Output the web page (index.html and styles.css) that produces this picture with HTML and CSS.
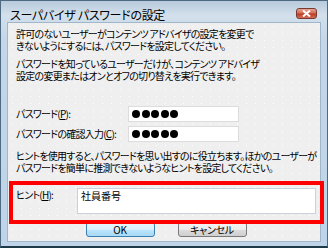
FILE: index.html
```html
<!DOCTYPE html>
<html lang="ja">
<head>
  <meta charset="UTF-8">
  <title>スーパバイザ パスワードの設定</title>
  <link rel="stylesheet" href="styles.css">
</head>
<body>
  <div class="window">
    <div class="titlebar">
      <span class="title">スーパバイザ パスワードの設定</span>
      <button class="close" type="button" aria-label="閉じる">
        <svg width="9" height="7" viewBox="0 0 9 7"><path d="M1 0.5 L8 6.5 M8 0.5 L1 6.5" stroke="#fff" stroke-width="2"/></svg>
      </button>
    </div>

    <div class="client">
      <p class="msg">許可のないユーザーがコンテンツ アドバイザの設定を変更で<br>きないようにするには、パスワードを設定してください。</p>
      <p class="msg gap">パスワードを知っているユーザーだけが、コンテンツ アドバイザ<br>設定の変更またはオンとオフの切り替えを実行できます。</p>

      <div class="rows">
        <label class="row">
          <span class="label">パスワード(<u>P</u>):</span>
          <span class="field"><i></i><i></i><i></i><i></i><i></i></span>
        </label>
        <label class="row">
          <span class="label">パスワードの確認入力(<u>C</u>):</span>
          <span class="field"><i></i><i></i><i></i><i></i><i></i></span>
        </label>
      </div>

      <p class="msg hint-msg">ヒントを使用すると、パスワードを思い出すのに役立ちます。ほかのユーザーが<br>パスワードを簡単に推測できないようなヒントを設定してください。</p>

      <label class="hint-row">
        <span class="hint-label">ヒント(<u>H</u>):</span>
        <span class="hint-field">社員番号</span>
      </label>

      <div class="buttons">
        <button class="btn default" type="button">OK</button>
        <button class="btn" type="button">キャンセル</button>
      </div>
    </div>

    <div class="mark"></div>
  </div>
</body>
</html>
```

FILE: styles.css
```css
body {
  margin: 0;
  width: 328px;
  height: 248px;
  overflow: hidden;
  font-family: "Noto Sans CJK JP", sans-serif;
  font-feature-settings: "palt";
  color: #000;
}

.window {
  position: relative;
  width: 328px;
  height: 248px;
  box-sizing: border-box;
  border: 1px solid #4d6a80;
  border-bottom: 2px solid #1e3a48;
  background: linear-gradient(#b7cadc, #d3e0ec 14px, #c4d6e8 40px, #bfd4e9);
  display: flex;
  flex-direction: column;
}

.titlebar {
  height: 21px;
  display: flex;
  align-items: flex-start;
  padding: 0 9px 0 9px;
  position: relative;
}

.title {
  font-size: 12px;
  line-height: 14px;
  margin-top: 7px;
  letter-spacing: -0.3px;
}

.close {
  position: absolute;
  left: 295px;
  top: 7px;
  width: 21px;
  height: 11px;
  padding: 0;
  border: 1px solid #7b3a30;
  border-radius: 3px;
  background: linear-gradient(#e6a595, #d46a55 45%, #bf3a22 55%, #d2705a);
  display: flex;
  align-items: center;
  justify-content: center;
}

.client {
  flex: 1;
  margin: 0 6px 4px 6px;
  border: 1px solid #9fb6cb;
  background-color: #efefef;
  background-image: radial-gradient(circle, #ffffff 0.6px, transparent 0.9px);
  background-size: 9px 7px;
  padding: 5px 4px 0 8px;
  font-size: 10px;
  line-height: 12px;
  letter-spacing: -0.75px;
}

.msg {
  margin: 0;
  white-space: nowrap;
}

.gap {
  margin-top: 6px;
}

.rows {
  margin-top: 24px;
  display: flex;
  flex-direction: column;
  gap: 4px;
}

.row {
  display: flex;
  align-items: center;
}

.label {
  width: 112px;
  white-space: nowrap;
}

.field {
  width: 111px;
  height: 16px;
  box-sizing: border-box;
  background: #fff;
  border: 1px solid #dcdcdc;
  display: flex;
  align-items: center;
  gap: 1.5px;
  padding-left: 3px;
}

.field i {
  width: 8px;
  height: 8px;
  border-radius: 50%;
  background: #000;
}

.hint-msg {
  margin-top: 8px;
}

.hint-row {
  margin-top: 14px;
  display: flex;
}

.hint-label {
  width: 61px;
  padding-top: 1px;
}

.hint-field {
  width: 239px;
  height: 26px;
  box-sizing: border-box;
  background: #fff;
  border: 1px solid #c9d2dc;
  padding: 1px 3px;
  letter-spacing: 0;
}

.buttons {
  margin-top: 8px;
  display: flex;
  justify-content: center;
  gap: 23px;
}

.btn {
  width: 69px;
  height: 15px;
  padding: 0;
  font-family: "Noto Sans CJK JP", sans-serif;
  font-feature-settings: "palt";
  font-size: 10px;
  line-height: 12px;
  letter-spacing: -0.3px;
  color: #000;
  border: 1px solid #7a7a7a;
  border-radius: 3px;
  background: linear-gradient(#f4f4f4, #ebebeb 50%, #dddddd 51%, #cfcfcf);
}

.btn.default {
  border-color: #3c7fb1;
  background: linear-gradient(#eaf6fd, #d9f0fc 50%, #bee6fd 51%, #a7d9f5);
}

.mark {
  position: absolute;
  left: 8px;
  top: 180px;
  width: 315px;
  height: 43px;
  box-sizing: border-box;
  border: 4px solid #ff0000;
}
```
